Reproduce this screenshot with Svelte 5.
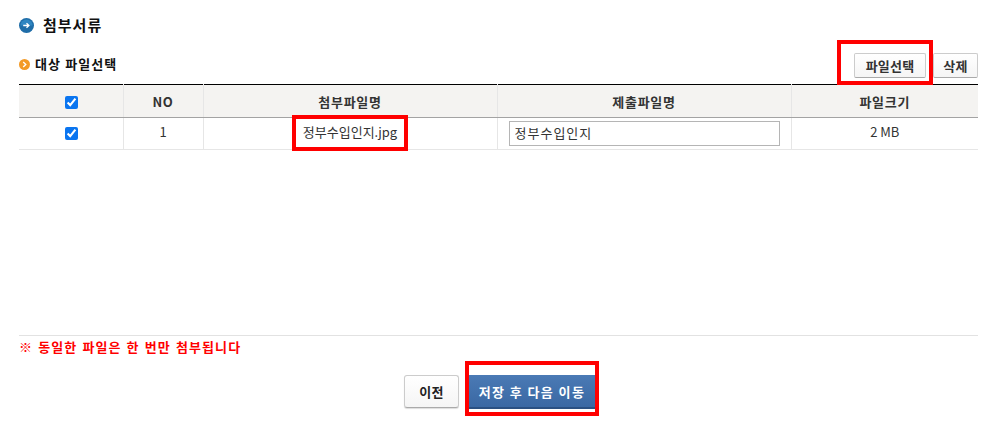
<script>
  const marks = [
    { name: 'pick', cls: 'mark-pick' },
    { name: 'file', cls: 'mark-file' },
    { name: 'save', cls: 'mark-save' }
  ];
</script>

<div class="page">
  <h2 class="title">
    <svg class="ico-blue" viewBox="0 0 16 16" aria-hidden="true">
      <circle cx="8" cy="8" r="8" fill="#1f6da8" />
      <path d="M1.5 8a6.5 6.5 0 0 1 13 0z" fill="#2f86c2" />
      <path d="M4.5 8h6M8 5.6 10.6 8 8 10.4" fill="none" stroke="#fff" stroke-width="1.4" />
    </svg>
    첨부서류
  </h2>

  <div class="toolbar">
    <h3 class="sub">
      <svg class="ico-orange" viewBox="0 0 12 12" aria-hidden="true">
        <circle cx="6" cy="6" r="6" fill="#f39a26" />
        <path d="M4.6 3.2 7.4 6 4.6 8.8" fill="none" stroke="#fff" stroke-width="1.5" />
      </svg>
      대상 파일선택
    </h3>
    <div class="tools">
      <button class="btn">파일선택</button>
      <button class="btn del">삭제</button>
    </div>
  </div>

  <table>
    <colgroup>
      <col class="c1" /><col class="c2" /><col class="c3" /><col class="c4" /><col />
    </colgroup>
    <thead>
      <tr>
        <th class="chk"><input type="checkbox" checked /></th>
        <th>NO</th>
        <th>첨부파일명</th>
        <th>제출파일명</th>
        <th>파일크기</th>
      </tr>
    </thead>
    <tbody>
      <tr>
        <td class="chk val"><input type="checkbox" checked /></td>
        <td class="val">1</td>
        <td class="val">정부수입인지.jpg</td>
        <td class="left"><input class="text" type="text" value="정부수입인지" /></td>
        <td class="val">2 MB</td>
      </tr>
    </tbody>
  </table>

  <div class="notice">※ 동일한 파일은 한 번만 첨부됩니다</div>

  <div class="actions">
    <button class="btn prev">이전</button>
    <button class="save">저장 후 다음 이동</button>
  </div>

  {#each marks as m (m.name)}
    <div class="mark {m.cls}"></div>
  {/each}
</div>

<style>
  :global(body) {
    margin: 0;
    background: #fff;
  }
  .page {
    position: relative;
    width: 991px;
    height: 422px;
    box-sizing: border-box;
    padding: 16px 13px 0 19px;
    overflow: hidden;
    font-family: "Noto Sans CJK KR", "Liberation Sans", sans-serif;
    font-size: 13px;
    color: #333;
  }
  .title {
    display: flex;
    align-items: center;
    gap: 9px;
    height: 18px;
    margin: 0;
    font-size: 15px;
    font-weight: 700;
    line-height: 18px;
    letter-spacing: 1px;
    color: #111;
  }
  .ico-blue {
    width: 15px;
    height: 15px;
    flex: none;
  }
  .toolbar {
    display: flex;
    justify-content: space-between;
    align-items: flex-end;
    height: 31px;
    margin-top: 19px;
    padding-bottom: 6px;
    box-sizing: border-box;
  }
  .sub {
    display: flex;
    align-items: center;
    gap: 5px;
    margin: 0 0 6px;
    font-size: 13px;
    font-weight: 700;
    line-height: 16px;
    letter-spacing: 1.1px;
    color: #111;
  }
  .ico-orange {
    width: 11px;
    height: 11px;
    flex: none;
  }
  .tools {
    display: flex;
    gap: 7px;
  }
  .btn {
    height: 25px;
    padding: 0;
    box-sizing: border-box;
    border: 1px solid #ccc;
    border-bottom-color: #aaa;
    border-radius: 2px;
    background: linear-gradient(#fff, #f5f5f5);
    font: 700 13px "Noto Sans CJK KR", "Liberation Sans", sans-serif;
    letter-spacing: 0.2px;
    color: #333;
    width: 72px;
  }
  .del {
    width: 45px;
  }
  table {
    width: 959px;
    border-collapse: collapse;
    table-layout: fixed;
    border-top: 1px solid #000;
  }
  .c1 { width: 104px; }
  .c2 { width: 80px; }
  .c3 { width: 294px; }
  .c4 { width: 294px; }
  th {
    height: 32px;
    padding: 0;
    background: #f4f3f1;
    border-bottom: 1px solid #a3a3a3;
    border-right: 1px solid #e6e6e6;
    font-size: 13px;
    font-weight: 700;
    letter-spacing: 0.7px;
    color: #333;
  }
  td {
    height: 31px;
    padding: 0;
    text-align: center;
    border-bottom: 1px solid #e6e6e6;
    border-right: 1px solid #e6e6e6;
    font-size: 13px;
    color: #333;
  }
  th:last-child, td:last-child {
    border-right: 0;
  }
  .chk {
    padding-left: 1px;
  }
  td.val {
    padding-bottom: 4px;
    height: 27px;
  }
  input[type="checkbox"] {
    width: 13px;
    height: 13px;
    margin: 0;
    vertical-align: middle;
    accent-color: #0a75f0;
  }
  td.left {
    text-align: left;
    padding-left: 11px;
  }
  .text {
    display: block;
    width: 271px;
    height: 25px;
    box-sizing: border-box;
    padding: 0 5px 2px;
    border: 1px solid #b5b5b5;
    font: 13px "Noto Sans CJK KR", "Liberation Sans", sans-serif;
    letter-spacing: 1px;
    color: #333;
  }
  .notice {
    margin-top: 185px;
    padding-top: 2px;
    border-top: 1px solid #e2e2e2;
    height: 17px;
    line-height: 17px;
    font-size: 13px;
    font-weight: 700;
    letter-spacing: 1.1px;
    word-spacing: 1px;
    color: #f00;
  }
  .actions {
    display: flex;
    justify-content: center;
    gap: 8px;
    margin-top: 20px;
    padding-left: 4px;
  }
  .prev {
    width: 55px;
    height: 33px;
    border-radius: 3px;
    color: #222;
    box-shadow: 0 1px 1px #ddd;
  }
  .save {
    width: 130px;
    height: 34px;
    padding: 0;
    border: 0;
    border-bottom: 2px solid #2a5082;
    background: linear-gradient(#4a7ab5, #3a68a3);
    font: 700 13px "Noto Sans CJK KR", "Liberation Sans", sans-serif;
    letter-spacing: 1.4px;
    color: #fff;
  }
  .mark {
    position: absolute;
    box-sizing: border-box;
    border: 4px solid #f00;
  }
  .mark-pick { left: 837px; top: 40px; width: 96px; height: 45px; }
  .mark-file { left: 292px; top: 115px; width: 116px; height: 36px; }
  .mark-save { left: 465px; top: 361px; width: 134px; height: 55px; }
</style>
